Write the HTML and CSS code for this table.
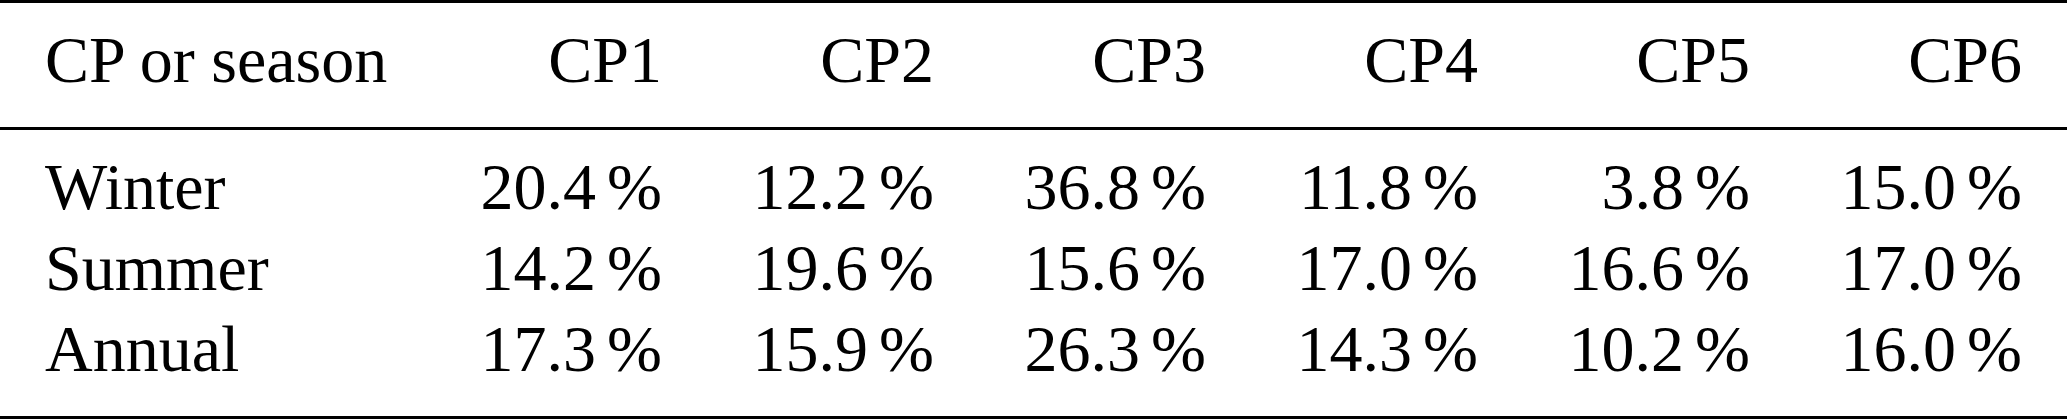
FILE: index.html
```html
<!DOCTYPE html>
<html lang="en">
<head>
<meta charset="utf-8">
<title>CP frequency by season</title>
<link rel="stylesheet" href="styles.css">
</head>
<body>
<table class="tbl">
  <colgroup>
    <col class="c-label">
    <col class="c-val"><col class="c-val"><col class="c-val">
    <col class="c-val"><col class="c-val"><col class="c-val">
  </colgroup>
  <thead>
    <tr>
      <th class="lbl">CP or season</th>
      <th>CP1</th><th>CP2</th><th>CP3</th><th>CP4</th><th>CP5</th><th>CP6</th>
    </tr>
  </thead>
  <tbody>
    <tr>
      <td class="lbl">Winter</td>
      <td>20.4<span class="pct">%</span></td>
      <td>12.2<span class="pct">%</span></td>
      <td>36.8<span class="pct">%</span></td>
      <td>11.8<span class="pct">%</span></td>
      <td>3.8<span class="pct">%</span></td>
      <td>15.0<span class="pct">%</span></td>
    </tr>
    <tr>
      <td class="lbl">Summer</td>
      <td>14.2<span class="pct">%</span></td>
      <td>19.6<span class="pct">%</span></td>
      <td>15.6<span class="pct">%</span></td>
      <td>17.0<span class="pct">%</span></td>
      <td>16.6<span class="pct">%</span></td>
      <td>17.0<span class="pct">%</span></td>
    </tr>
    <tr>
      <td class="lbl">Annual</td>
      <td>17.3<span class="pct">%</span></td>
      <td>15.9<span class="pct">%</span></td>
      <td>26.3<span class="pct">%</span></td>
      <td>14.3<span class="pct">%</span></td>
      <td>10.2<span class="pct">%</span></td>
      <td>16.0<span class="pct">%</span></td>
    </tr>
  </tbody>
</table>
</body>
</html>
```
FILE: styles.css
```css
html, body {
  margin: 0;
  padding: 0;
  background: #ffffff;
}

.tbl {
  width: 2067px;
  table-layout: fixed;
  border-collapse: separate;
  border-spacing: 0;
  font-family: "Liberation Serif", "Times New Roman", serif;
  font-size: 66px;
  line-height: 81px;
  color: #000000;
}

.c-label { width: 435px; }
.c-val { width: 272px; }

.tbl th,
.tbl td {
  padding: 0 45px;
  text-align: right;
  font-weight: normal;
  white-space: nowrap;
  vertical-align: baseline;
}

.tbl th.lbl,
.tbl td.lbl {
  text-align: left;
}

.tbl thead th {
  padding-top: 16px;
  padding-bottom: 27px;
  border-top: 3px solid #000;
  border-bottom: 3px solid #000;
}

.tbl tbody tr:first-child td {
  padding-top: 16px;
}

.tbl tbody tr:last-child td {
  padding-bottom: 27px;
  border-bottom: 3px solid #000;
}

.pct {
  margin-left: 0.167em;
}
```
